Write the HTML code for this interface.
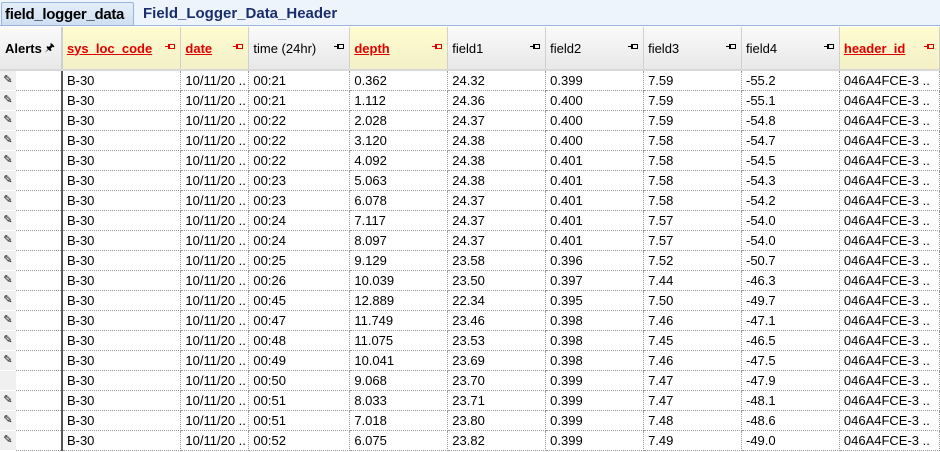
<!DOCTYPE html>
<html><head><style>
body{margin:0;width:940px;height:452px;overflow:hidden;background:#fff;font-family:"Liberation Sans",Tahoma,sans-serif;font-size:13px;position:relative}
.tabs{position:absolute;left:0;top:0;width:940px;height:25px;background:#eef4fc;border-bottom:1px solid #9ab5d9}
.tab1{position:absolute;left:1px;top:2px;width:133px;height:23px;background:linear-gradient(#e4eef9,#cfdff2);border:1px solid #9ab5d9;border-bottom:none;border-radius:2px 2px 0 0;font-weight:bold;font-size:15px;line-height:23px;padding-left:3px;box-sizing:border-box;color:#000;white-space:nowrap;overflow:hidden;letter-spacing:-0.3px}
.tab2{position:absolute;left:143px;top:2px;font-weight:bold;font-size:15px;line-height:23px;color:#1a2e6e}
table{position:absolute;left:0;top:27px;border-collapse:collapse;table-layout:fixed}
th{height:42px;padding:0 4px;text-align:left;font-weight:normal;background:linear-gradient(#fafafa,#e8e8e8);border-right:1px solid #d0d0d0;border-bottom:2px solid #d8d8d8;position:relative;white-space:nowrap;overflow:hidden}
th.k{background:linear-gradient(#fffcd0,#f3f0c8);color:#e00000;font-weight:bold;text-decoration:underline}
.p{position:absolute;right:5px;top:17px;width:10px;height:6px}
.p:before{content:"";position:absolute;left:0;top:2px;width:3px;height:1px;background:#000}
.p:after{content:"";position:absolute;left:3px;top:0;width:4px;height:3px;border:1px solid #000;border-left-width:2px}
th.k .p:before{background:#e00000}
th.k .p:after{border-color:#e00000}
td{height:19px;padding:0 0 0 4px;border-right:1px dotted #999;border-bottom:1px dotted #999;white-space:nowrap;overflow:hidden;line-height:19px}
td.r{background:#f0f0f0;border-right:none;border-bottom:1px solid #fff;padding:0;text-align:center;font-size:11px}
td.a{border-right:2px solid #555;}
</style></head><body>
<div class="tabs"><div class="tab1">field_logger_data</div><div class="tab2">Field_Logger_Data_Header</div></div>
<table>
<colgroup><col style="width:16px"><col style="width:46px"><col style="width:119px"><col style="width:68px"><col style="width:101px"><col style="width:98px"><col style="width:98px"><col style="width:98px"><col style="width:98px"><col style="width:98px"><col style="width:100px"></colgroup>
<tr><th colspan="2" style="font-weight:bold;border-right:2px solid #d0d0d0;padding-left:5px">Alerts<span style="position:absolute;right:6px;top:12px;font-size:11px;font-weight:normal">&#x1F588;</span></th><th class="k">sys_loc_code<span class="p"></span></th><th class="k">date<span class="p"></span></th><th>time (24hr)<span class="p"></span></th><th class="k">depth<span class="p"></span></th><th>field1<span class="p"></span></th><th>field2<span class="p"></span></th><th>field3<span class="p"></span></th><th>field4<span class="p"></span></th><th class="k">header_id<span class="p"></span></th></tr>
<tr><td class="r">✎</td><td class="a"></td><td>B-30</td><td>10/11/20 ..</td><td>00:21</td><td>0.362</td><td>24.32</td><td>0.399</td><td>7.59</td><td>-55.2</td><td>046A4FCE-3 ..</td></tr>
<tr><td class="r">✎</td><td class="a"></td><td>B-30</td><td>10/11/20 ..</td><td>00:21</td><td>1.112</td><td>24.36</td><td>0.400</td><td>7.59</td><td>-55.1</td><td>046A4FCE-3 ..</td></tr>
<tr><td class="r">✎</td><td class="a"></td><td>B-30</td><td>10/11/20 ..</td><td>00:22</td><td>2.028</td><td>24.37</td><td>0.400</td><td>7.59</td><td>-54.8</td><td>046A4FCE-3 ..</td></tr>
<tr><td class="r">✎</td><td class="a"></td><td>B-30</td><td>10/11/20 ..</td><td>00:22</td><td>3.120</td><td>24.38</td><td>0.400</td><td>7.58</td><td>-54.7</td><td>046A4FCE-3 ..</td></tr>
<tr><td class="r">✎</td><td class="a"></td><td>B-30</td><td>10/11/20 ..</td><td>00:22</td><td>4.092</td><td>24.38</td><td>0.401</td><td>7.58</td><td>-54.5</td><td>046A4FCE-3 ..</td></tr>
<tr><td class="r">✎</td><td class="a"></td><td>B-30</td><td>10/11/20 ..</td><td>00:23</td><td>5.063</td><td>24.38</td><td>0.401</td><td>7.58</td><td>-54.3</td><td>046A4FCE-3 ..</td></tr>
<tr><td class="r">✎</td><td class="a"></td><td>B-30</td><td>10/11/20 ..</td><td>00:23</td><td>6.078</td><td>24.37</td><td>0.401</td><td>7.58</td><td>-54.2</td><td>046A4FCE-3 ..</td></tr>
<tr><td class="r">✎</td><td class="a"></td><td>B-30</td><td>10/11/20 ..</td><td>00:24</td><td>7.117</td><td>24.37</td><td>0.401</td><td>7.57</td><td>-54.0</td><td>046A4FCE-3 ..</td></tr>
<tr><td class="r">✎</td><td class="a"></td><td>B-30</td><td>10/11/20 ..</td><td>00:24</td><td>8.097</td><td>24.37</td><td>0.401</td><td>7.57</td><td>-54.0</td><td>046A4FCE-3 ..</td></tr>
<tr><td class="r">✎</td><td class="a"></td><td>B-30</td><td>10/11/20 ..</td><td>00:25</td><td>9.129</td><td>23.58</td><td>0.396</td><td>7.52</td><td>-50.7</td><td>046A4FCE-3 ..</td></tr>
<tr><td class="r">✎</td><td class="a"></td><td>B-30</td><td>10/11/20 ..</td><td>00:26</td><td>10.039</td><td>23.50</td><td>0.397</td><td>7.44</td><td>-46.3</td><td>046A4FCE-3 ..</td></tr>
<tr><td class="r">✎</td><td class="a"></td><td>B-30</td><td>10/11/20 ..</td><td>00:45</td><td>12.889</td><td>22.34</td><td>0.395</td><td>7.50</td><td>-49.7</td><td>046A4FCE-3 ..</td></tr>
<tr><td class="r">✎</td><td class="a"></td><td>B-30</td><td>10/11/20 ..</td><td>00:47</td><td>11.749</td><td>23.46</td><td>0.398</td><td>7.46</td><td>-47.1</td><td>046A4FCE-3 ..</td></tr>
<tr><td class="r">✎</td><td class="a"></td><td>B-30</td><td>10/11/20 ..</td><td>00:48</td><td>11.075</td><td>23.53</td><td>0.398</td><td>7.45</td><td>-46.5</td><td>046A4FCE-3 ..</td></tr>
<tr><td class="r">✎</td><td class="a"></td><td>B-30</td><td>10/11/20 ..</td><td>00:49</td><td>10.041</td><td>23.69</td><td>0.398</td><td>7.46</td><td>-47.5</td><td>046A4FCE-3 ..</td></tr>
<tr><td class="r"></td><td class="a"></td><td>B-30</td><td>10/11/20 ..</td><td>00:50</td><td>9.068</td><td>23.70</td><td>0.399</td><td>7.47</td><td>-47.9</td><td>046A4FCE-3 ..</td></tr>
<tr><td class="r">✎</td><td class="a"></td><td>B-30</td><td>10/11/20 ..</td><td>00:51</td><td>8.033</td><td>23.71</td><td>0.399</td><td>7.47</td><td>-48.1</td><td>046A4FCE-3 ..</td></tr>
<tr><td class="r">✎</td><td class="a"></td><td>B-30</td><td>10/11/20 ..</td><td>00:51</td><td>7.018</td><td>23.80</td><td>0.399</td><td>7.48</td><td>-48.6</td><td>046A4FCE-3 ..</td></tr>
<tr><td class="r">✎</td><td class="a"></td><td>B-30</td><td>10/11/20 ..</td><td>00:52</td><td>6.075</td><td>23.82</td><td>0.399</td><td>7.49</td><td>-49.0</td><td>046A4FCE-3 ..</td></tr>
</table>
</body></html>
